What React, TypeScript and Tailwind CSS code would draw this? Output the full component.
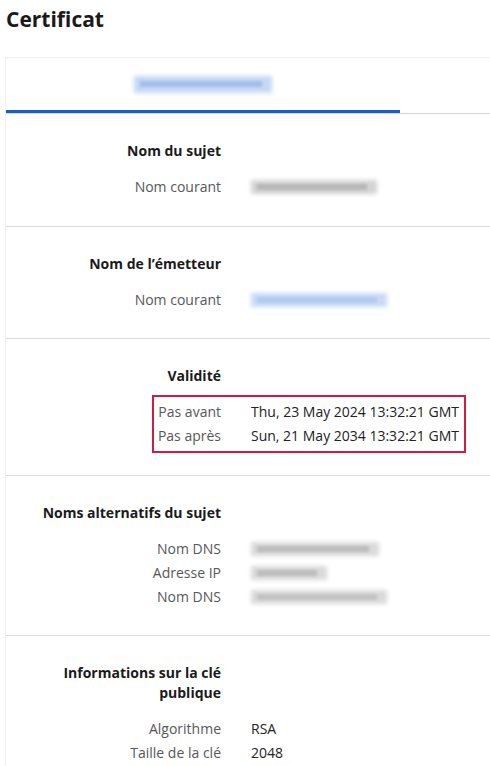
import React from "react";

const font = { fontFamily: '"Open Sans", "Noto Sans", sans-serif' };

function Blur({ w, color, dark, h = 14 }: { w: number; color: string; dark: string; h?: number }) {
  return (
    <div className="relative h-[20px] flex items-center" style={{ width: w }}>
      <div className="absolute inset-x-0 blur-[2px]" style={{ background: color, height: h, top: (20 - h) / 2 }} />
      <div className="absolute left-[6px] right-[10px] top-[7px] h-[6px] blur-[1.5px] opacity-70" style={{ background: dark }} />
    </div>
  );
}

function Row({ label, children }: { label: string; children: React.ReactNode }) {
  return (
    <div className="flex h-[24px] items-center">
      <div className="w-[215px] shrink-0 text-right text-[#575757]">{label}</div>
      <div className="ml-[30px] text-[#222222] flex items-center">{children}</div>
    </div>
  );
}

function Section({ title, children, last }: { title: React.ReactNode; children: React.ReactNode; last?: boolean }) {
  return (
    <div className={`pt-[27px] pb-[26.5px] ${last ? "" : "border-b border-[#dcdcdc]"}`}>
      <div className="flex">
        <div className="w-[215px] shrink-0 text-right font-bold text-[#1a1a1a] leading-[20px]">{title}</div>
      </div>
      <div className="mt-[14px]">{children}</div>
    </div>
  );
}

export default function App() {
  return (
    <div className="bg-white min-h-[766px] w-[490px] overflow-hidden text-[14px] leading-[24px]" style={font}>
      <div className="pl-[6px] pt-[4px] h-[57px]">
        <h1 className="text-[21px] font-bold text-[#1a1a1a] leading-[30px]">Certificat</h1>
      </div>
      <div className="ml-[5px] border-l border-t border-[#f0f0f0]">
        <div className="h-[56px] border-b border-[#d4d4d4] flex">
          <div className="w-[394px] h-full flex flex-col">
            <div className="flex-1 flex items-center pl-[128px]">
              <Blur w={138} color="#c6d8f4" dark="#93b3e8" h={17} />
            </div>
            <div className="h-[3px] bg-[#1a5fc9]" />
          </div>
        </div>

        <Section title="Nom du sujet">
          <Row label="Nom courant">
            <Blur w={126} color="#d4d4d4" dark="#aaaaaa" />
          </Row>
        </Section>

        <Section title="Nom de l’émetteur">
          <Row label="Nom courant">
            <Blur w={136} color="#c8daf6" dark="#a9c3ef" />
          </Row>
        </Section>

        <Section title="Validité">
          <div className="relative">
            <div className="absolute top-[-5px] bottom-[-5px] left-[146px] w-[314px] border-2 border-[#d21a45]" />
            <Row label="Pas avant">Thu, 23 May 2024 13:32:21 GMT</Row>
            <Row label="Pas après">Sun, 21 May 2034 13:32:21 GMT</Row>
          </div>
        </Section>

        <Section title="Noms alternatifs du sujet">
          <Row label="Nom DNS">
            <Blur w={128} color="#dadada" dark="#b0b0b0" />
          </Row>
          <Row label="Adresse IP">
            <Blur w={76} color="#dadada" dark="#b0b0b0" />
          </Row>
          <Row label="Nom DNS">
            <Blur w={136} color="#dadada" dark="#b8b8b8" />
          </Row>
        </Section>

        <Section
          last
          title={
            <>
              Informations sur la clé
              <br />
              publique
            </>
          }
        >
          <Row label="Algorithme">RSA</Row>
          <Row label="Taille de la clé">2048</Row>
        </Section>
      </div>
    </div>
  );
}
